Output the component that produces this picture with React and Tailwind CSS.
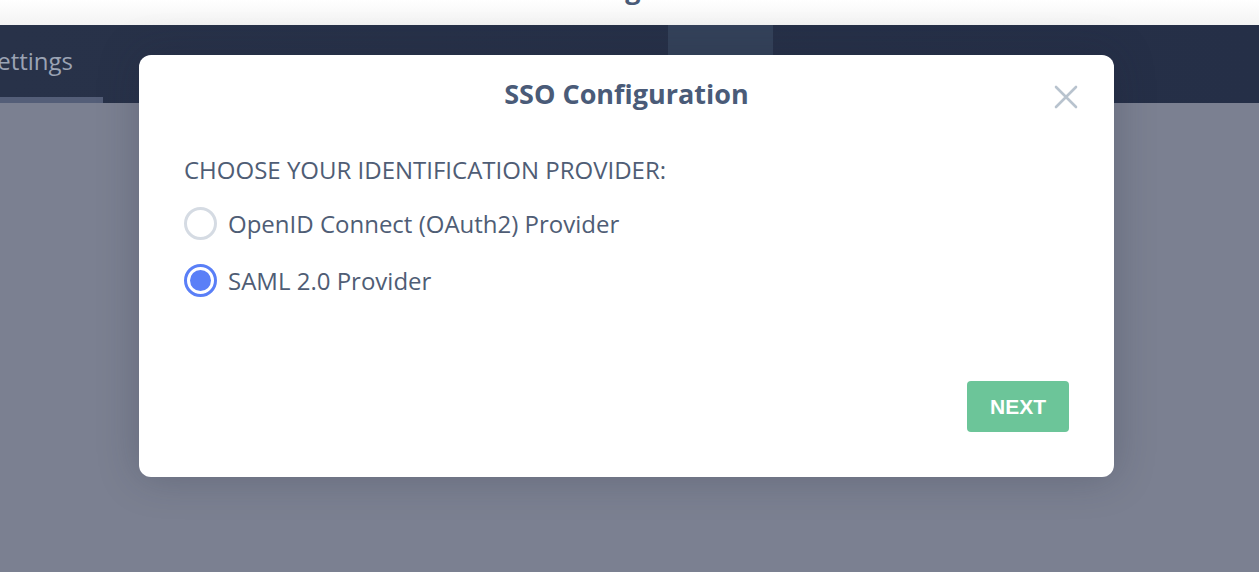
import React, { useState } from 'react';

const options = [
  { id: 'oidc', label: 'OpenID Connect (OAuth2) Provider' },
  { id: 'saml', label: 'SAML 2.0 Provider' },
];

const tabs = [
  { name: 'Settings', cls: 'px-[30px] ml-[-46px] border-b-[6px] border-[#545e78]' },
  { name: 'Data Center Location', cls: 'w-[320px] pl-[30px] ml-[36px]' },
  { name: 'Audit Logs', cls: 'w-[180px] pl-[29px]' },
  { name: 'SSO', cls: 'w-[105px] justify-center ml-[29px] bg-[#34425a]' },
];

const Radio = ({ checked }) =>
  checked ? (
    <span className="w-[33px] h-[33px] rounded-full border-[3px] border-[#5a7ff7] flex items-center justify-center shrink-0">
      <span className="w-[21px] h-[21px] rounded-full bg-[#5a7ff7]" />
    </span>
  ) : (
    <span className="w-[33px] h-[33px] rounded-full border-[3px] border-[#d5dbe3] shrink-0" />
  );

export default function App() {
  const [provider, setProvider] = useState('saml');

  return (
    <div className="relative w-full h-[572px] overflow-hidden bg-[#7b8091] font-['Open_Sans',sans-serif]">
      {/* Top header, scrolled mostly out of view */}
      <div className="h-[25px] overflow-hidden bg-gradient-to-b from-white to-[#f3f3f3] flex justify-center">
        <h1 className="mt-[-26px] pr-[60px] text-[27px] leading-[30px] font-bold text-[#4a5b78]">Settings</h1>
      </div>

      {/* Tabs bar */}
      <nav className="h-[78px] bg-gradient-to-r from-[#283249] to-[#252f47] flex items-stretch">
        {tabs.map((t) => (
          <div
            key={t.name}
            className={`flex items-center shrink-0 text-[24px] text-[#9ba3b4] whitespace-nowrap ${t.cls}`}
          >
            {t.name}
          </div>
        ))}
      </nav>

      {/* Modal */}
      <div className="absolute left-[139px] top-[55px] w-[975px] h-[422px] bg-white rounded-[12px] shadow-[0_0_40px_rgba(30,35,55,0.25)] flex flex-col">
        <button className="absolute right-[36px] top-[30px] w-[24px] h-[24px] text-[#b8c3ce]">
          <svg viewBox="0 0 24 24" width="24" height="24" fill="none" stroke="currentColor" strokeWidth="2.6" strokeLinecap="round">
            <path d="M2 2L22 22M22 2L2 22" />
          </svg>
        </button>

        <h3 className="pt-[21px] text-center text-[27px] leading-[36px] font-bold text-[#4a5b78]">SSO Configuration</h3>

        <div className="px-[45px] mt-[43px]">
          <p className="text-[24px] leading-[30px] text-[#4f5d75]">CHOOSE YOUR IDENTIFICATION PROVIDER:</p>
          <div className="mt-[22px] flex flex-col gap-[24px]">
            {options.map((o) => (
              <label
                key={o.id}
                onClick={() => setProvider(o.id)}
                className="flex items-center gap-[11px] cursor-pointer text-[24px] leading-[33px] text-[#4f5d75]"
              >
                <Radio checked={provider === o.id} />
                <span>{o.label}</span>
              </label>
            ))}
          </div>
        </div>

        <div className="mt-auto flex justify-end pr-[45px] pb-[45px]">
          <button className="w-[102px] h-[51px] rounded-[4px] bg-[#6cc599] text-white text-[21px] font-bold font-['Liberation_Sans',Arial,sans-serif]">
            NEXT
          </button>
        </div>
      </div>
    </div>
  );
}
